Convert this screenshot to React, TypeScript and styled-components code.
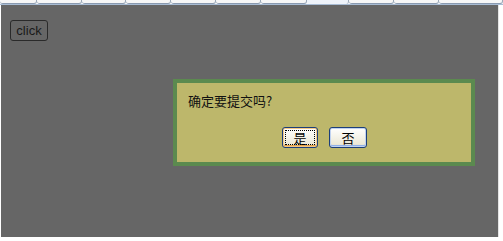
import { FunctionComponent } from "react";
import styled, { createGlobalStyle } from "styled-components";

const GlobalStyle = createGlobalStyle`
  html, body {
    margin: 0;
    padding: 0;
    background: #ffffff;
    font-family: "Liberation Sans", Arial, sans-serif;
  }
`;

const tabs = [40, 49, 49, 49, 49, 49, 50, 46, 49, 49, 70];

const App: FunctionComponent = () => {
  return (
    <>
      <GlobalStyle />
      <Frame>
        <TabStrip>
          {tabs.map((w, i) => (
            <Tab key={i} style={{ width: w }} $active={i === 7} />
          ))}
        </TabStrip>
        <Body>
          <Stage>
            <ClickButton>click</ClickButton>
            <Dialog>
              <Message>确定要提交吗?</Message>
              <ButtonRow>
                <XpButton $focused>
                  <Focus>是</Focus>
                </XpButton>
                <XpButton>否</XpButton>
              </ButtonRow>
            </Dialog>
          </Stage>
          <ScrollEdge />
        </Body>
      </Frame>
    </>
  );
};

const Frame = styled.div`
  width: 503px;
  height: 241px;
  display: flex;
  flex-direction: column;
  overflow: hidden;
  background: #ffffff;
`;

const TabStrip = styled.div`
  height: 5px;
  display: flex;
  background: #f4f6f9;
  border-bottom: 1px solid #a8bcd4;
  box-sizing: border-box;
`;

const Tab = styled.div<{ $active?: boolean }>`
  height: 4px;
  box-sizing: border-box;
  border-right: 1px solid #9aa8b8;
  border-bottom: ${(p) => (p.$active ? "none" : "1px solid #8a9ab0")};
  background: ${(p) => (p.$active ? "#eef3fa" : "#f7f7f7")};
  border-radius: 0 0 3px 3px;
`;

const Body = styled.div`
  flex: 1;
  display: flex;
  padding: 0 0 4px 1px;
`;

const Stage = styled.div`
  position: relative;
  width: 497px;
  background: #666666;
  padding: 15px 9px;
  box-sizing: border-box;
`;

const ScrollEdge = styled.div`
  flex: 1;
  background: #ffffff;
  border-left: 1px solid #e4e4e4;
`;

const ClickButton = styled.button`
  display: block;
  width: 38px;
  height: 21px;
  padding: 0;
  background: #666666;
  border: 1px solid #2a2a2a;
  border-radius: 3px;
  color: #1a1a1a;
  font-family: "Liberation Sans", Arial, sans-serif;
  font-size: 13px;
  line-height: 19px;
`;

const Dialog = styled.div`
  position: absolute;
  left: 172px;
  top: 74px;
  width: 302px;
  height: 87px;
  box-sizing: border-box;
  border: 4px solid #5b8a4f;
  background: #bdb76b;
  padding: 9px 11px 0;
  display: flex;
  flex-direction: column;
`;

const Message = styled.div`
  font-family: "Noto Sans CJK SC", "Liberation Sans", sans-serif;
  font-size: 13px;
  line-height: 17px;
  color: #111111;
`;

const ButtonRow = styled.div`
  display: flex;
  gap: 11px;
  margin-top: 18px;
  padding-left: 94px;
`;

const XpButton = styled.button<{ $focused?: boolean }>`
  width: ${(p) => (p.$focused ? "36px" : "38px")};
  height: 21px;
  padding: 2px;
  box-sizing: border-box;
  border: 1px solid #1c3f7a;
  border-radius: 3px;
  background: linear-gradient(#ffffff, #ece9d8 85%, #d6d0c0);
  box-shadow: ${(p) =>
    p.$focused
      ? "inset 0 0 0 1px #f5c884, inset 0 -1px 0 1px #e3a44c"
      : "inset 0 0 0 1px #c0d2f0, inset 0 -1px 0 1px #8fb0e8"};
  font-family: "Noto Sans CJK SC", "Liberation Sans", sans-serif;
  font-size: 13px;
  line-height: 15px;
  color: #000000;
  display: flex;
  align-items: center;
  justify-content: center;
`;

const Focus = styled.span`
  flex: 1;
  align-self: stretch;
  display: flex;
  align-items: center;
  justify-content: center;
  border: 1px dotted #000000;
`;

export default App;
